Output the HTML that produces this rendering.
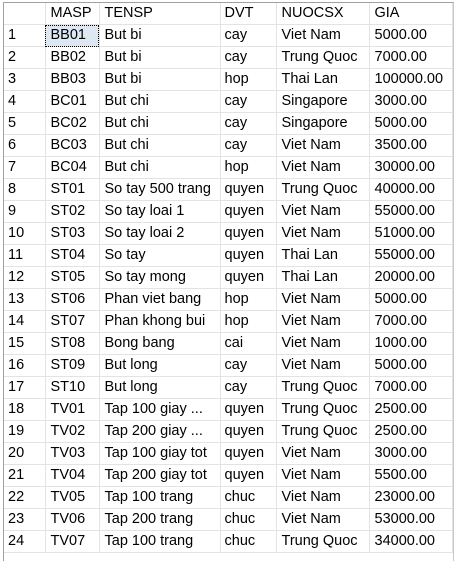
<!DOCTYPE html>
<html><head><style>
body{margin:0;width:454px;height:560px;background:#fff;position:relative;overflow:hidden;font-family:"Liberation Sans",Arial,sans-serif;font-size:14.5px;color:#000}
.frame{position:absolute;left:3px;top:2px;width:449px;height:558px;border-left:1px solid #a0a0a0;border-top:1px solid #a0a0a0;border-right:1px solid #c8c8c8}
table{position:absolute;left:4px;top:3px;border-collapse:collapse;table-layout:fixed}
td{height:21px;line-height:21px;padding:0;border-right:1px solid #e3e3e3;border-bottom:1px solid #e3e3e3;white-space:nowrap;overflow:hidden;vertical-align:middle}
.c0{padding-left:4px}
.c1{padding-left:5px}
.c2{padding-left:5px}
.c3{padding-left:4px}
.c4{padding-left:5px}
.c5{padding-left:5px}
.sel{background:#dde8f3;outline:1px dotted #000;outline-offset:-1px}
</style></head><body>
<div class="frame"></div>
<table>
<colgroup><col style="width:41px"><col style="width:54px"><col style="width:121px"><col style="width:56px"><col style="width:93px"><col style="width:83px"></colgroup>
<tr><td class="c0"></td><td class="c1">MASP</td><td class="c2">TENSP</td><td class="c3">DVT</td><td class="c4">NUOCSX</td><td class="c5">GIA</td></tr>
<tr><td class="c0">1</td><td class="c1 sel">BB01</td><td class="c2">But bi</td><td class="c3">cay</td><td class="c4">Viet Nam</td><td class="c5">5000.00</td></tr>
<tr><td class="c0">2</td><td class="c1">BB02</td><td class="c2">But bi</td><td class="c3">cay</td><td class="c4">Trung Quoc</td><td class="c5">7000.00</td></tr>
<tr><td class="c0">3</td><td class="c1">BB03</td><td class="c2">But bi</td><td class="c3">hop</td><td class="c4">Thai Lan</td><td class="c5">100000.00</td></tr>
<tr><td class="c0">4</td><td class="c1">BC01</td><td class="c2">But chi</td><td class="c3">cay</td><td class="c4">Singapore</td><td class="c5">3000.00</td></tr>
<tr><td class="c0">5</td><td class="c1">BC02</td><td class="c2">But chi</td><td class="c3">cay</td><td class="c4">Singapore</td><td class="c5">5000.00</td></tr>
<tr><td class="c0">6</td><td class="c1">BC03</td><td class="c2">But chi</td><td class="c3">cay</td><td class="c4">Viet Nam</td><td class="c5">3500.00</td></tr>
<tr><td class="c0">7</td><td class="c1">BC04</td><td class="c2">But chi</td><td class="c3">hop</td><td class="c4">Viet Nam</td><td class="c5">30000.00</td></tr>
<tr><td class="c0">8</td><td class="c1">ST01</td><td class="c2">So tay 500 trang</td><td class="c3">quyen</td><td class="c4">Trung Quoc</td><td class="c5">40000.00</td></tr>
<tr><td class="c0">9</td><td class="c1">ST02</td><td class="c2">So tay loai 1</td><td class="c3">quyen</td><td class="c4">Viet Nam</td><td class="c5">55000.00</td></tr>
<tr><td class="c0">10</td><td class="c1">ST03</td><td class="c2">So tay loai 2</td><td class="c3">quyen</td><td class="c4">Viet Nam</td><td class="c5">51000.00</td></tr>
<tr><td class="c0">11</td><td class="c1">ST04</td><td class="c2">So tay</td><td class="c3">quyen</td><td class="c4">Thai Lan</td><td class="c5">55000.00</td></tr>
<tr><td class="c0">12</td><td class="c1">ST05</td><td class="c2">So tay mong</td><td class="c3">quyen</td><td class="c4">Thai Lan</td><td class="c5">20000.00</td></tr>
<tr><td class="c0">13</td><td class="c1">ST06</td><td class="c2">Phan viet bang</td><td class="c3">hop</td><td class="c4">Viet Nam</td><td class="c5">5000.00</td></tr>
<tr><td class="c0">14</td><td class="c1">ST07</td><td class="c2">Phan khong bui</td><td class="c3">hop</td><td class="c4">Viet Nam</td><td class="c5">7000.00</td></tr>
<tr><td class="c0">15</td><td class="c1">ST08</td><td class="c2">Bong bang</td><td class="c3">cai</td><td class="c4">Viet Nam</td><td class="c5">1000.00</td></tr>
<tr><td class="c0">16</td><td class="c1">ST09</td><td class="c2">But long</td><td class="c3">cay</td><td class="c4">Viet Nam</td><td class="c5">5000.00</td></tr>
<tr><td class="c0">17</td><td class="c1">ST10</td><td class="c2">But long</td><td class="c3">cay</td><td class="c4">Trung Quoc</td><td class="c5">7000.00</td></tr>
<tr><td class="c0">18</td><td class="c1">TV01</td><td class="c2">Tap 100 giay ...</td><td class="c3">quyen</td><td class="c4">Trung Quoc</td><td class="c5">2500.00</td></tr>
<tr><td class="c0">19</td><td class="c1">TV02</td><td class="c2">Tap 200 giay ...</td><td class="c3">quyen</td><td class="c4">Trung Quoc</td><td class="c5">2500.00</td></tr>
<tr><td class="c0">20</td><td class="c1">TV03</td><td class="c2">Tap 100 giay tot</td><td class="c3">quyen</td><td class="c4">Viet Nam</td><td class="c5">3000.00</td></tr>
<tr><td class="c0">21</td><td class="c1">TV04</td><td class="c2">Tap 200 giay tot</td><td class="c3">quyen</td><td class="c4">Viet Nam</td><td class="c5">5500.00</td></tr>
<tr><td class="c0">22</td><td class="c1">TV05</td><td class="c2">Tap 100 trang</td><td class="c3">chuc</td><td class="c4">Viet Nam</td><td class="c5">23000.00</td></tr>
<tr><td class="c0">23</td><td class="c1">TV06</td><td class="c2">Tap 200 trang</td><td class="c3">chuc</td><td class="c4">Viet Nam</td><td class="c5">53000.00</td></tr>
<tr><td class="c0">24</td><td class="c1">TV07</td><td class="c2">Tap 100 trang</td><td class="c3">chuc</td><td class="c4">Trung Quoc</td><td class="c5">34000.00</td></tr>
</table>
</body></html>
